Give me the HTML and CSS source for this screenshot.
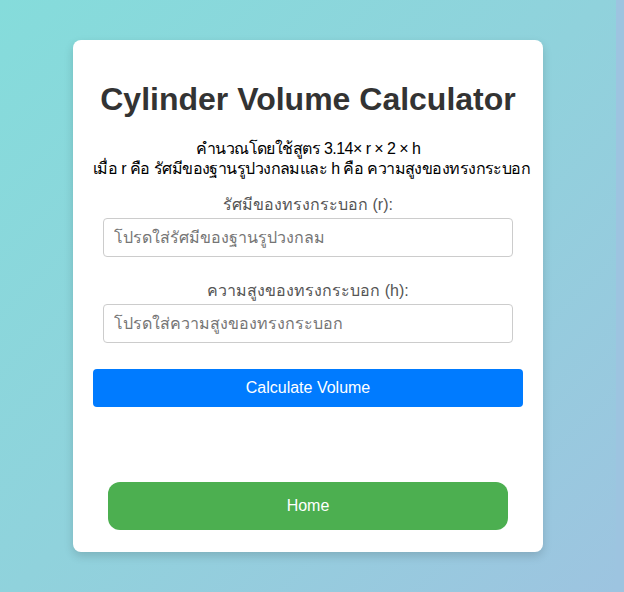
FILE: index.html
```html
<!DOCTYPE html>
<html lang="th">
<head>
<meta charset="utf-8">
<title>Cylinder Volume Calculator</title>
<link rel="stylesheet" href="styles.css">
</head>
<body>
<div class="card">
  <h1 class="title">Cylinder Volume Calculator</h1>
  <p class="desc">คำนวณโดยใช้สูตร 3.14× r × 2 × h<br>เมื่อ r คือ รัศมีของฐานรูปวงกลมและ h คือ ความสูงของทรงกระบอก</p>
  <form class="form">
    <label class="label" for="r">รัศมีของทรงกระบอก (r):</label>
    <input class="input" id="r" type="text" placeholder="โปรดใส่รัศมีของฐานรูปวงกลม">
    <label class="label second" for="h">ความสูงของทรงกระบอก (h):</label>
    <input class="input" id="h" type="text" placeholder="โปรดใส่ความสูงของทรงกระบอก">
  </form>
  <button class="calc" type="button">Calculate Volume</button>
  <div class="home-wrap"><button class="home" type="button">Home</button></div>
</div>
</body>
</html>
```
FILE: styles.css
```css
html, body { height: 100%; }
html { background: #9dc4e0; }
body {
  margin: 0 8px 0 0;
  font-family: "Liberation Sans", Arial, sans-serif;
  background: linear-gradient(135deg, #85dcdb 0%, #90d2dc 50%, #9dc4e0 100%);
  display: flex;
  justify-content: center;
  align-items: flex-start;
}
.card {
  margin-top: 40px;
  width: 430px;
  padding: 20px 20px 22px;
  background: #fff;
  border-radius: 8px;
  box-shadow: 0 4px 10px rgba(0,0,0,0.15);
  text-align: center;
}
.title {
  margin: 21px 0 21px;
  font-size: 32px;
  line-height: 37px;
  font-weight: bold;
  color: #333;
}
.desc {
  margin: 0 0 16px;
  font-size: 16px;
  line-height: 20px;
  color: #000;
  white-space: nowrap;
  letter-spacing: -0.55px;
}
.form {
  padding: 0 10px;
  display: flex;
  flex-direction: column;
  align-items: stretch;
}
.label {
  display: block;
  font-size: 16px;
  line-height: 20px;
  color: #555;
  margin-bottom: 3px;
}
.label.second { margin-top: 24px; }
.input {
  box-sizing: border-box;
  height: 39px;
  padding: 0 10px;
  border: 1px solid #ccc;
  border-radius: 4px;
  font-family: inherit;
  font-size: 16px;
  color: #333;
}
.input::placeholder { color: #757575; }
.calc {
  display: block;
  width: 100%;
  height: 38px;
  margin-top: 26px;
  border: none;
  border-radius: 4px;
  background: #007bff;
  color: #fff;
  font-family: inherit;
  font-size: 16px;
}
.home-wrap {
  display: flex;
  justify-content: center;
  margin-top: 75px;
}
.home {
  width: 400px;
  height: 48px;
  border: none;
  border-radius: 12px;
  background: #4caf50;
  color: #fff;
  font-family: inherit;
  font-size: 16px;
}
```
